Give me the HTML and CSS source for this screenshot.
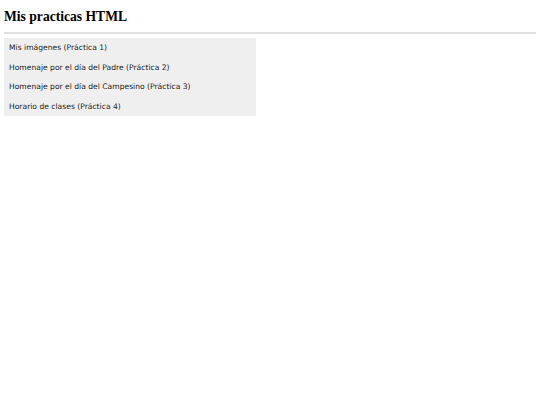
FILE: index.html
```html
<!DOCTYPE html>
<html lang="es">
<head>
<meta charset="utf-8">
<title>Mis practicas HTML</title>
<link rel="stylesheet" href="styles.css">
</head>
<body>
<h1 class="title">Mis practicas HTML</h1>
<hr class="rule">
<ul class="menu">
  <li class="item"><a class="link" href="#">Mis imágenes (Práctica 1)</a></li>
  <li class="item"><a class="link" href="#">Homenaje por el día del Padre (Práctica 2)</a></li>
  <li class="item"><a class="link" href="#">Homenaje por el día del Campesino (Práctica 3)</a></li>
  <li class="item"><a class="link" href="#">Horario de clases (Práctica 4)</a></li>
</ul>
</body>
</html>
```
FILE: styles.css
```css
html, body { margin: 0; padding: 0; background: #fff; }
body { padding: 0 4px; }
.title {
  font-family: "Liberation Serif", "Times New Roman", serif;
  font-weight: bold;
  font-size: 13.6px;
  line-height: 18px;
  margin: 0;
  padding: 8px 0 6px;
  color: #000;
}
.rule {
  border: 0;
  height: 2px;
  background: #e0e0e0;
  margin: 0 0 4px;
}
.menu {
  list-style: none;
  margin: 0;
  padding: 0;
  width: 252px;
  background: #efefef;
}
.item {
  font-family: "DejaVu Sans", Verdana, sans-serif;
  font-size: 7.6px;
  line-height: 19.5px;
  padding-left: 5px;
}
.link { color: #1a1a1a; text-decoration: none; }
```
